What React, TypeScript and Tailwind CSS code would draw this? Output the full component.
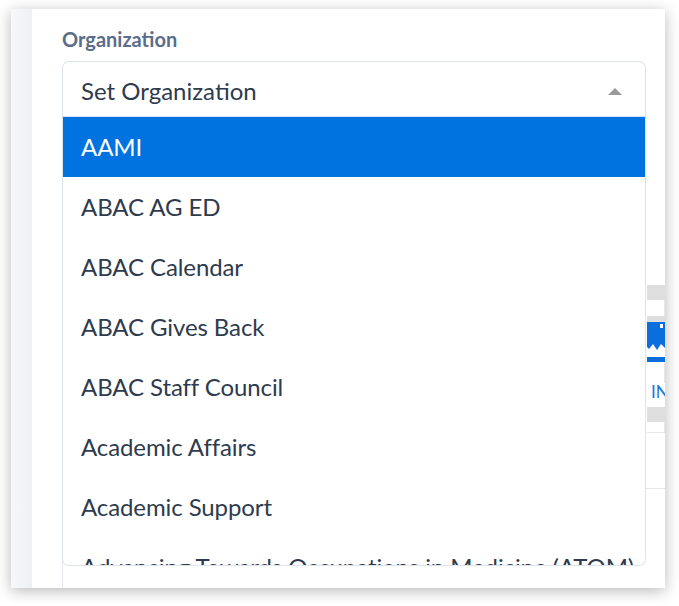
const ORGS = [
  'AAMI',
  'ABAC AG ED',
  'ABAC Calendar',
  'ABAC Gives Back',
  'ABAC Staff Council',
  'Academic Affairs',
  'Academic Support',
  'Advancing Towards Occupations in Medicine (ATOM)',
];

function CaretUp() {
  return (
    <svg width="14" height="7" viewBox="0 0 14 7" className="shrink-0">
      <path d="M0 7 L7 0 L14 7 Z" fill="#9b9b9b" />
    </svg>
  );
}

// bits of the form that sit under the open list (only a sliver shows)
function HiddenPreview() {
  return (
    <div className="-mr-[19px]">
      <div className="h-[168px]" />
      <div className="flex">
        <div className="flex-1" />
        <div className="w-[18px] flex flex-col border-b border-[#e3e6ea]">
          <div className="h-[15px] bg-[#dedede]" />
          <div className="h-[16px] bg-white border-r border-[#e6e6e6]" />
          <div className="h-[6px] bg-[#dedede]" />
          <svg width="18" height="33" viewBox="0 0 18 33" className="block">
            <path d="M0 0 H18 V26 L14 22 L10 28 L6 22 L2 27 L0 25 Z" fill="#0a6fdc" />
            <path d="M13 2 L16 2 L16 6 L13 6 Z" fill="#ffffff" />
          </svg>
          <div className="h-[2px] bg-white" />
          <div className="h-[5px] bg-[#0a6fdc]" />
          <div className="h-[21px] bg-white border-r border-[#e6e6e6]" />
          <div className="h-[17px] bg-white pl-[4px] text-[17px] leading-[17px] text-[#1a73d9] overflow-hidden whitespace-nowrap">
            IN
          </div>
          <div className="h-[7px] bg-white" />
          <div className="h-[15px] bg-[#dedede]" />
          <div className="h-[10px] bg-white border-r border-[#e6e6e6]" />
        </div>
      </div>
      <div className="mt-[55px] h-[200px] border-t border-l border-[#e3e6ea]" />
    </div>
  );
}

export default function App() {
  return (
    <div className="min-h-[606px] bg-white pt-[9px] pl-[11px] font-[Lato,sans-serif]">
      <div className="relative w-[654px] h-[579px] bg-white overflow-hidden flex shadow-[0_3px_14px_rgba(0,0,0,0.28)]">
        <div className="w-[21px] shrink-0 bg-gradient-to-r from-[#f7f8fa] to-[#eef0f3]" />
        <div className="flex-1 min-w-0 pl-[30px] pr-[19px] pt-[18px]">
          <label className="block text-[20px] leading-[24px] font-bold text-[#5a6d89] mb-[10px]">
            Organization
          </label>

          <div className="relative z-10">
            <div className="h-[56px] flex items-center justify-between border border-[#dfe4ea] border-b-[#d5e2f1] rounded-t-[7px] pl-[18px] pr-[23px] pt-[4px] bg-white">
              <span className="text-[24px] leading-[28px] text-[#2e3b4d]">Set Organization</span>
              <CaretUp />
            </div>
            <ul className="absolute top-full left-0 right-0 h-[449px] overflow-hidden bg-white border-x border-b border-[#dfe4ea] rounded-b-[7px]">
              {ORGS.map((org, i) => (
                <li
                  key={org}
                  className={
                    i === 0
                      ? 'h-[60px] flex items-center pl-[18px] pb-[1px] bg-[#0073e1] text-white text-[24px] leading-[28px] tracking-[-0.1px] whitespace-nowrap'
                      : 'h-[60px] flex items-center pl-[18px] pb-[1px] text-[#2e3b4d] text-[24px] leading-[28px] tracking-[-0.1px] whitespace-nowrap'
                  }
                >
                  {org}
                </li>
              ))}
            </ul>
          </div>

          <HiddenPreview />
        </div>
      </div>
    </div>
  );
}
